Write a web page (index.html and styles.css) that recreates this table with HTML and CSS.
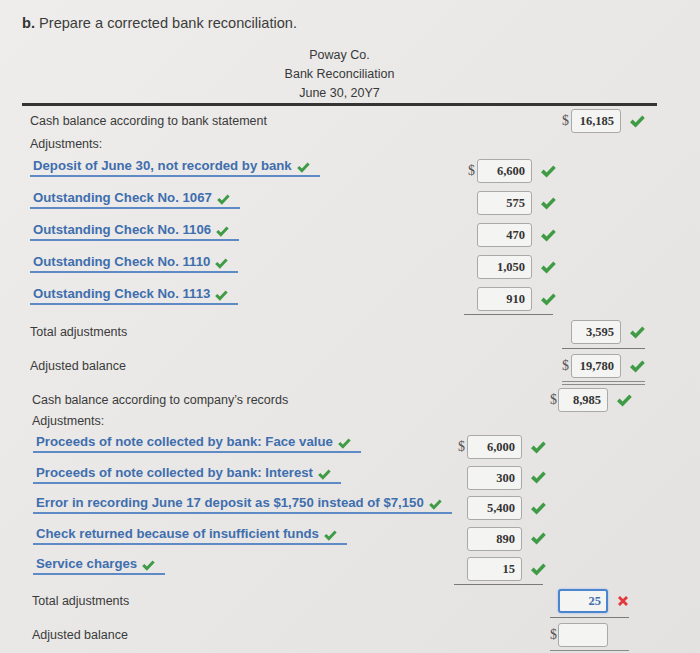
FILE: index.html
```html
<!DOCTYPE html>
<html>
<head>
<meta charset="utf-8">
<title>Bank Reconciliation</title>
<link rel="stylesheet" href="styles.css">
</head>
<body>
<div class="page">
  <p class="title"><b>b.</b> Prepare a corrected bank reconciliation.</p>
  <div class="head">
    <div>Poway Co.</div>
    <div>Bank Reconciliation</div>
    <div>June 30, 20Y7</div>
  </div>

  <div class="sec sec1">
    <div class="row r-first">
      <div class="lbl plain">Cash balance according to bank statement</div>
      <div class="c1"></div>
      <div class="c2 cell"><span class="cur">$</span><span class="box wide">16,185</span><svg class="ok" viewBox="0 0 15 13"><path d="M0 7.2 L2.6 4.6 L5.6 7.6 L12.3 0.6 L14.8 3.1 L5.6 12.6 Z"/></svg></div>
    </div>
    <div class="note n-adj1">Adjustments:</div>
    <div class="row r-dep">
      <div class="lbl"><span class="lnk">Deposit of June 30, not recorded by bank<svg class="ok sm" viewBox="0 0 15 13"><path d="M0 7.2 L2.6 4.6 L5.6 7.6 L12.3 0.6 L14.8 3.1 L5.6 12.6 Z"/></svg></span></div>
      <div class="c1 cell"><span class="cur">$</span><span class="box">6,600</span><svg class="ok" viewBox="0 0 15 13"><path d="M0 7.2 L2.6 4.6 L5.6 7.6 L12.3 0.6 L14.8 3.1 L5.6 12.6 Z"/></svg></div>
      <div class="c2"></div>
    </div>
    <div class="row r-s1">
      <div class="lbl"><span class="lnk">Outstanding Check No. 1067<svg class="ok sm" viewBox="0 0 15 13"><path d="M0 7.2 L2.6 4.6 L5.6 7.6 L12.3 0.6 L14.8 3.1 L5.6 12.6 Z"/></svg></span></div>
      <div class="c1 cell"><span class="cur"></span><span class="box">575</span><svg class="ok" viewBox="0 0 15 13"><path d="M0 7.2 L2.6 4.6 L5.6 7.6 L12.3 0.6 L14.8 3.1 L5.6 12.6 Z"/></svg></div>
      <div class="c2"></div>
    </div>
    <div class="row r-s1">
      <div class="lbl"><span class="lnk">Outstanding Check No. 1106<svg class="ok sm" viewBox="0 0 15 13"><path d="M0 7.2 L2.6 4.6 L5.6 7.6 L12.3 0.6 L14.8 3.1 L5.6 12.6 Z"/></svg></span></div>
      <div class="c1 cell"><span class="cur"></span><span class="box">470</span><svg class="ok" viewBox="0 0 15 13"><path d="M0 7.2 L2.6 4.6 L5.6 7.6 L12.3 0.6 L14.8 3.1 L5.6 12.6 Z"/></svg></div>
      <div class="c2"></div>
    </div>
    <div class="row r-s1">
      <div class="lbl"><span class="lnk">Outstanding Check No. 1110<svg class="ok sm" viewBox="0 0 15 13"><path d="M0 7.2 L2.6 4.6 L5.6 7.6 L12.3 0.6 L14.8 3.1 L5.6 12.6 Z"/></svg></span></div>
      <div class="c1 cell"><span class="cur"></span><span class="box">1,050</span><svg class="ok" viewBox="0 0 15 13"><path d="M0 7.2 L2.6 4.6 L5.6 7.6 L12.3 0.6 L14.8 3.1 L5.6 12.6 Z"/></svg></div>
      <div class="c2"></div>
    </div>
    <div class="row r-s1">
      <div class="lbl"><span class="lnk">Outstanding Check No. 1113<svg class="ok sm" viewBox="0 0 15 13"><path d="M0 7.2 L2.6 4.6 L5.6 7.6 L12.3 0.6 L14.8 3.1 L5.6 12.6 Z"/></svg></span></div>
      <div class="c1 cell rule"><span class="cur"></span><span class="box">910</span><svg class="ok" viewBox="0 0 15 13"><path d="M0 7.2 L2.6 4.6 L5.6 7.6 L12.3 0.6 L14.8 3.1 L5.6 12.6 Z"/></svg></div>
      <div class="c2"></div>
    </div>
    <div class="row r-tot1">
      <div class="lbl plain">Total adjustments</div>
      <div class="c1"></div>
      <div class="c2 cell rule"><span class="cur"></span><span class="box wide">3,595</span><svg class="ok" viewBox="0 0 15 13"><path d="M0 7.2 L2.6 4.6 L5.6 7.6 L12.3 0.6 L14.8 3.1 L5.6 12.6 Z"/></svg></div>
    </div>
    <div class="row r-adj1">
      <div class="lbl plain">Adjusted balance</div>
      <div class="c1"></div>
      <div class="c2 cell dbl"><span class="cur">$</span><span class="box wide">19,780</span><svg class="ok" viewBox="0 0 15 13"><path d="M0 7.2 L2.6 4.6 L5.6 7.6 L12.3 0.6 L14.8 3.1 L5.6 12.6 Z"/></svg></div>
    </div>
  </div>

  <div class="sec sec2">
    <div class="row r-cash2">
      <div class="lbl plain">Cash balance according to company’s records</div>
      <div class="c1"></div>
      <div class="c2 cell"><span class="cur">$</span><span class="box wide">8,985</span><svg class="ok" viewBox="0 0 15 13"><path d="M0 7.2 L2.6 4.6 L5.6 7.6 L12.3 0.6 L14.8 3.1 L5.6 12.6 Z"/></svg></div>
    </div>
    <div class="note n-adj2">Adjustments:</div>
    <div class="row r-face">
      <div class="lbl"><span class="lnk">Proceeds of note collected by bank: Face value<svg class="ok sm" viewBox="0 0 15 13"><path d="M0 7.2 L2.6 4.6 L5.6 7.6 L12.3 0.6 L14.8 3.1 L5.6 12.6 Z"/></svg></span></div>
      <div class="c1 cell"><span class="cur">$</span><span class="box">6,000</span><svg class="ok" viewBox="0 0 15 13"><path d="M0 7.2 L2.6 4.6 L5.6 7.6 L12.3 0.6 L14.8 3.1 L5.6 12.6 Z"/></svg></div>
      <div class="c2"></div>
    </div>
    <div class="row r-s2">
      <div class="lbl"><span class="lnk">Proceeds of note collected by bank: Interest<svg class="ok sm" viewBox="0 0 15 13"><path d="M0 7.2 L2.6 4.6 L5.6 7.6 L12.3 0.6 L14.8 3.1 L5.6 12.6 Z"/></svg></span></div>
      <div class="c1 cell"><span class="cur"></span><span class="box">300</span><svg class="ok" viewBox="0 0 15 13"><path d="M0 7.2 L2.6 4.6 L5.6 7.6 L12.3 0.6 L14.8 3.1 L5.6 12.6 Z"/></svg></div>
      <div class="c2"></div>
    </div>
    <div class="row r-s2">
      <div class="lbl"><span class="lnk">Error in recording June 17 deposit as $1,750 instead of $7,150<svg class="ok sm" viewBox="0 0 15 13"><path d="M0 7.2 L2.6 4.6 L5.6 7.6 L12.3 0.6 L14.8 3.1 L5.6 12.6 Z"/></svg></span></div>
      <div class="c1 cell"><span class="cur"></span><span class="box">5,400</span><svg class="ok" viewBox="0 0 15 13"><path d="M0 7.2 L2.6 4.6 L5.6 7.6 L12.3 0.6 L14.8 3.1 L5.6 12.6 Z"/></svg></div>
      <div class="c2"></div>
    </div>
    <div class="row r-s2">
      <div class="lbl"><span class="lnk">Check returned because of insufficient funds<svg class="ok sm" viewBox="0 0 15 13"><path d="M0 7.2 L2.6 4.6 L5.6 7.6 L12.3 0.6 L14.8 3.1 L5.6 12.6 Z"/></svg></span></div>
      <div class="c1 cell"><span class="cur"></span><span class="box">890</span><svg class="ok" viewBox="0 0 15 13"><path d="M0 7.2 L2.6 4.6 L5.6 7.6 L12.3 0.6 L14.8 3.1 L5.6 12.6 Z"/></svg></div>
      <div class="c2"></div>
    </div>
    <div class="row r-s2">
      <div class="lbl"><span class="lnk">Service charges<svg class="ok sm" viewBox="0 0 15 13"><path d="M0 7.2 L2.6 4.6 L5.6 7.6 L12.3 0.6 L14.8 3.1 L5.6 12.6 Z"/></svg></span></div>
      <div class="c1 cell rule"><span class="cur"></span><span class="box">15</span><svg class="ok" viewBox="0 0 15 13"><path d="M0 7.2 L2.6 4.6 L5.6 7.6 L12.3 0.6 L14.8 3.1 L5.6 12.6 Z"/></svg></div>
      <div class="c2"></div>
    </div>
    <div class="row r-tot2">
      <div class="lbl plain">Total adjustments</div>
      <div class="c1"></div>
      <div class="c2 cell rule"><span class="cur"></span><span class="box wide focus">25</span><svg class="bad" viewBox="0 0 12 12"><path d="M2 2 L10 10 M10 2 L2 10"/></svg></div>
    </div>
    <div class="row r-adj2">
      <div class="lbl plain">Adjusted balance</div>
      <div class="c1"></div>
      <div class="c2 cell dbl"><span class="cur">$</span><span class="box wide"></span><span class="gap"></span></div>
    </div>
  </div>
</div>
</body>
</html>
```

FILE: styles.css
```css
* { box-sizing: border-box; margin: 0; padding: 0; }
html, body { background: #e9e8e6; }
body {
  font-family: "Liberation Sans", Arial, sans-serif;
  font-size: 12.5px;
  color: #3a3a3a;
  overflow: hidden;
}
.page {
  height: 653px;
  padding: 13px 43px 0 22px;
  background: linear-gradient(135deg, #eeedeb 0%, #e8e7e5 55%, #e3e2e0 100%);
}
.title {
  font-size: 14.6px;
  line-height: 20px;
  color: #3c3c3c;
}
.title b { color: #333; }

.head {
  margin-top: 13px;
  text-align: center;
  line-height: 19px;
  border-bottom: 3px solid #343434;
  color: #383838;
}

.sec1 { padding-left: 8px; }
.sec2 { padding-left: 10px; }

.row {
  display: grid;
  align-items: start;
}
.sec1 .row { grid-template-columns: 438px 94px auto; }
.sec2 .row { grid-template-columns: 426px 92px auto; }

.lbl { justify-self: start; }
.lbl.plain { line-height: 24px; }

.note { line-height: 16px; }

.lnk {
  display: inline-block;
  margin-top: -2px;
  padding: 0 10px 1px 3px;
  line-height: 16px;
  font-size: 13.2px;
  font-weight: bold;
  color: #3f6eae;
  border-bottom: 2px solid #5e8bc5;
}
.sec2 .lnk { margin-left: 1px; }

.cell {
  display: flex;
  align-items: center;
  justify-self: start;
}
.cur {
  width: 9px;
  font-family: "Liberation Serif", "Times New Roman", serif;
  font-size: 14px;
  line-height: 24px;
  color: #555;
}
.sec2 .c2 .cur { width: 8px; }
.box {
  display: block;
  width: 55px;
  height: 24px;
  padding-right: 6px;
  border: 1px solid #a9a9a8;
  border-radius: 3px;
  background: #f4f4f3;
  text-align: right;
  font-family: "Liberation Serif", "Times New Roman", serif;
  font-weight: bold;
  font-size: 12.5px;
  line-height: 22px;
  color: #343434;
}
.box.wide { width: 50px; }
.box.focus {
  border: 2px solid #4b85cf;
  line-height: 20px;
  padding-right: 5px;
  color: #3f6db0;
  box-shadow: 0 0 2px #8fb4e6;
}

.ok {
  width: 15px;
  height: 13px;
  margin-left: 9px;
  fill: #3f9b45;
}
.ok.sm {
  width: 13px;
  height: 11px;
  margin-left: 5px;
  vertical-align: -3px;
}
.bad {
  width: 12px;
  height: 12px;
  margin-left: 9px;
  stroke: #e2373d;
  stroke-width: 2.8;
  fill: none;
}
.gap { width: 21px; }

.c1.rule {
  margin-left: -4px;
  padding-left: 4px;
  padding-bottom: 3px;
  border-bottom: 1.5px solid #7a7a7a;
}
.c1.rule .ok { margin-right: -3px; }
.c2.rule {
  padding-bottom: 4px;
  border-bottom: 1.5px solid #7a7a7a;
}
.c2.dbl {
  padding-bottom: 3px;
  border-bottom: 4px double #8a8a8a;
}

/* vertical rhythm */
.r-first { margin-top: 3px; }
.n-adj1 { margin-top: 3px; }
.r-dep { margin-top: 7px; }
.r-s1 { margin-top: 8px; }
.r-tot1 { margin-top: 5px; }
.r-adj1 { margin-top: 5px; }
.r-cash2 { margin-top: 3px; }
.n-adj2 { margin-top: 1px; }
.r-face { margin-top: 6px; }
.r-s2 { margin-top: 6.5px; }
.r-tot2 { margin-top: 4px; }
.r-adj2 { margin-top: 4.5px; }
```
